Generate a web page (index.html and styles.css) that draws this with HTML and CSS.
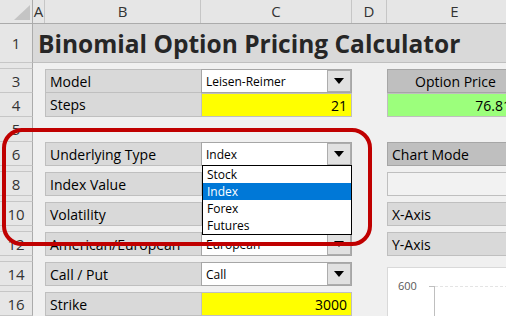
FILE: index.html
```html
<!DOCTYPE html>
<html lang="en">

<head>
    <meta charset="UTF-8">
    <title>Binomial Option Pricing Calculator</title>
    <link rel="stylesheet" href="styles.css">
</head>

<body>
    <div class="colheads">
        <div class="corner"><span class="tri"></span></div>
        <div class="col w-a">A</div>
        <div class="col w-b">B</div>
        <div class="col w-c">C</div>
        <div class="col w-d">D</div>
        <div class="col w-e">E</div>
    </div>

    <div class="sheet">
        <!-- row headers -->
        <div class="rh r1">1</div>
        <div class="rh r2"></div>
        <div class="rh r3">3</div>
        <div class="rh r4">4</div>
        <div class="rh r5">5</div>
        <div class="rh r6">6</div>
        <div class="rh r7"></div>
        <div class="rh r8">8</div>
        <div class="rh r9"></div>
        <div class="rh r10">10</div>
        <div class="rh r11"></div>
        <div class="rh r12">12</div>
        <div class="rh r13"></div>
        <div class="rh r14">14</div>
        <div class="rh r15"></div>
        <div class="rh r16">16</div>

        <div class="title r1">Binomial Option Pricing Calculator</div>

        <!-- inputs -->
        <div class="lbl r3">Model</div>
        <div class="inp r3">Leisen-Reimer<span class="dd"></span></div>
        <div class="lbl r4 joined">Steps</div>
        <div class="inp yel r4 joined">21</div>

        <div class="lbl r6">Underlying Type</div>
        <div class="inp r6">Index<span class="dd"></span>
            <ul class="list">
                <li>Stock</li>
                <li class="sel">Index</li>
                <li>Forex</li>
                <li>Futures</li>
            </ul>
        </div>
        <div class="lbl r8">Index Value</div>
        <div class="inp yel r8">3000</div>
        <div class="lbl r10">Volatility</div>
        <div class="inp yel r10">20%</div>
        <div class="lbl r12">American/European</div>
        <div class="inp r12">European<span class="dd"></span></div>
        <div class="lbl r14">Call / Put</div>
        <div class="inp r14">Call<span class="dd"></span></div>
        <div class="lbl r16">Strike</div>
        <div class="inp yel r16">3000</div>

        <!-- outputs -->
        <div class="out dark center r3">Option Price</div>
        <div class="out green right r4 joined">76.811</div>
        <div class="out dark r6">Chart Mode</div>
        <div class="out empty r8"></div>
        <div class="out mid r10">X-Axis</div>
        <div class="out mid r12">Y-Axis</div>

        <div class="chart">
            <svg width="136" height="60">
                <text x="10" y="22" class="tick">600</text>
                <line x1="41" y1="18.5" x2="46" y2="18.5" stroke="#bfbfbf" />
                <line x1="46.5" y1="18" x2="46.5" y2="60" stroke="#bfbfbf" />
                <line x1="47" y1="18.5" x2="136" y2="18.5" stroke="#e4e4e4" stroke-dasharray="3 2" />
            </svg>
        </div>
    </div>

    <svg class="ring" width="506" height="316">
        <rect x="4" y="130" width="366" height="114" rx="18" ry="18" />
    </svg>
</body>

</html>
```

FILE: styles.css
```css
body {
    margin: 0;
    width: 506px;
    height: 316px;
    overflow: hidden;
    position: relative;
    background-color: #f0f0f0;
    font-family: "Open Sans", Arial, sans-serif;
    color: #000;
}

.colheads {
    display: flex;
    height: 24px;
    box-sizing: border-box;
    border-bottom: 1px solid #ababab;
    background-color: #e6e6e6;
    width: 530px;
}

.corner {
    width: 33px;
    flex: none;
    box-sizing: border-box;
    border-right: 1px solid #ababab;
    position: relative;
}

.tri {
    position: absolute;
    left: 14px;
    top: 5px;
    width: 0;
    height: 0;
    border-left: 16px solid transparent;
    border-bottom: 15px solid #c4c4c4;
}

.col {
    flex: none;
    box-sizing: border-box;
    border-right: 1px solid #c6c6c6;
    text-align: center;
    font-size: 15px;
    line-height: 23px;
    color: #333;
}

.w-a { width: 12px; }
.w-b { width: 156px; }
.w-c { width: 151px; }
.w-d { width: 35px; }
.w-e { width: 136px; }

.sheet {
    display: grid;
    grid-template-columns: 33px 12px 156px 151px 35px 136px;
    grid-template-rows: 39px 6px 24px 24px 25px 24px 6px 24px 6px 24px 6px 24px 6px 24px 6px 24px;
    width: 530px;
}

.r1 { grid-row: 1; }
.r2 { grid-row: 2; }
.r3 { grid-row: 3; }
.r4 { grid-row: 4; }
.r5 { grid-row: 5; }
.r6 { grid-row: 6; }
.r7 { grid-row: 7; }
.r8 { grid-row: 8; }
.r9 { grid-row: 9; }
.r10 { grid-row: 10; }
.r11 { grid-row: 11; }
.r12 { grid-row: 12; }
.r13 { grid-row: 13; }
.r14 { grid-row: 14; }
.r15 { grid-row: 15; }
.r16 { grid-row: 16; }

.rh {
    grid-column: 1;
    background-color: #e6e6e6;
    box-sizing: border-box;
    border-right: 1px solid #ababab;
    border-bottom: 1px solid #c6c6c6;
    display: flex;
    align-items: center;
    justify-content: center;
    font-size: 15px;
    color: #333;
}

.title {
    grid-column: 2 / -1;
    background-color: #d9d9d9;
    box-sizing: border-box;
    border-bottom: 1px solid #bfbfbf;
    padding-left: 5px;
    display: flex;
    align-items: center;
    font-size: 24.5px;
    font-weight: bold;
    color: #262626;
    white-space: nowrap;
}

.lbl {
    grid-column: 3;
    background-color: #d9d9d9;
    border: 1px solid #bfbfbf;
    border-right: none;
    padding-left: 4px;
    display: flex;
    align-items: center;
    font-size: 14px;
    white-space: nowrap;
    overflow: hidden;
}

.joined {
    border-top: none;
}

.inp {
    grid-column: 4;
    position: relative;
    background-color: #fff;
    border: 1px solid #a6a6a6;
    padding-left: 4px;
    display: flex;
    align-items: center;
    font-size: 12px;
}

.yel {
    background-color: #ffff00;
    border-color: #bfbfbf;
    justify-content: flex-end;
    padding-right: 4px;
    font-size: 14px;
}

.dd {
    position: absolute;
    right: 0;
    top: 0;
    bottom: 0;
    width: 22px;
    background-color: #e1e1e1;
    border: 1px solid #adadad;
    display: flex;
    align-items: center;
    justify-content: center;
}

.dd::after {
    content: "";
    border-left: 5px solid transparent;
    border-right: 5px solid transparent;
    border-top: 6px solid #000;
}

.list {
    position: absolute;
    left: 0;
    top: 22px;
    width: 148px;
    margin: 0;
    padding: 0;
    list-style: none;
    background-color: #fff;
    border: 1px solid #000;
    z-index: 2;
}

.list li {
    height: 17px;
    line-height: 17px;
    padding-left: 4px;
    font-size: 12px;
}

.list .sel {
    background-color: #0078d7;
    color: #fff;
}

.out {
    grid-column: 6;
    border: 1px solid #bfbfbf;
    border-right: none;
    padding: 0 4px;
    display: flex;
    align-items: center;
    font-size: 14px;
    white-space: nowrap;
}

.dark { background-color: #bfbfbf; border-color: #a6a6a6; }
.mid { background-color: #d9d9d9; }
.empty { background-color: #f2f2f2; }
.green { background-color: #9cff7c; }
.center { justify-content: center; }
.right { justify-content: flex-end; }

.chart {
    grid-column: 6;
    grid-row: 14 / 17;
    margin-top: 5px;
    background-color: #fff;
    border-left: 1px solid #d9d9d9;
    border-top: 1px solid #d9d9d9;
    overflow: hidden;
}

.chart svg {
    display: block;
}

.tick {
    font-family: "Open Sans", Arial, sans-serif;
    font-size: 11px;
    fill: #595959;
}

.ring {
    position: absolute;
    left: 0;
    top: 0;
    pointer-events: none;
}

.ring rect {
    fill: none;
    stroke: #c00000;
    stroke-width: 4;
}
```
